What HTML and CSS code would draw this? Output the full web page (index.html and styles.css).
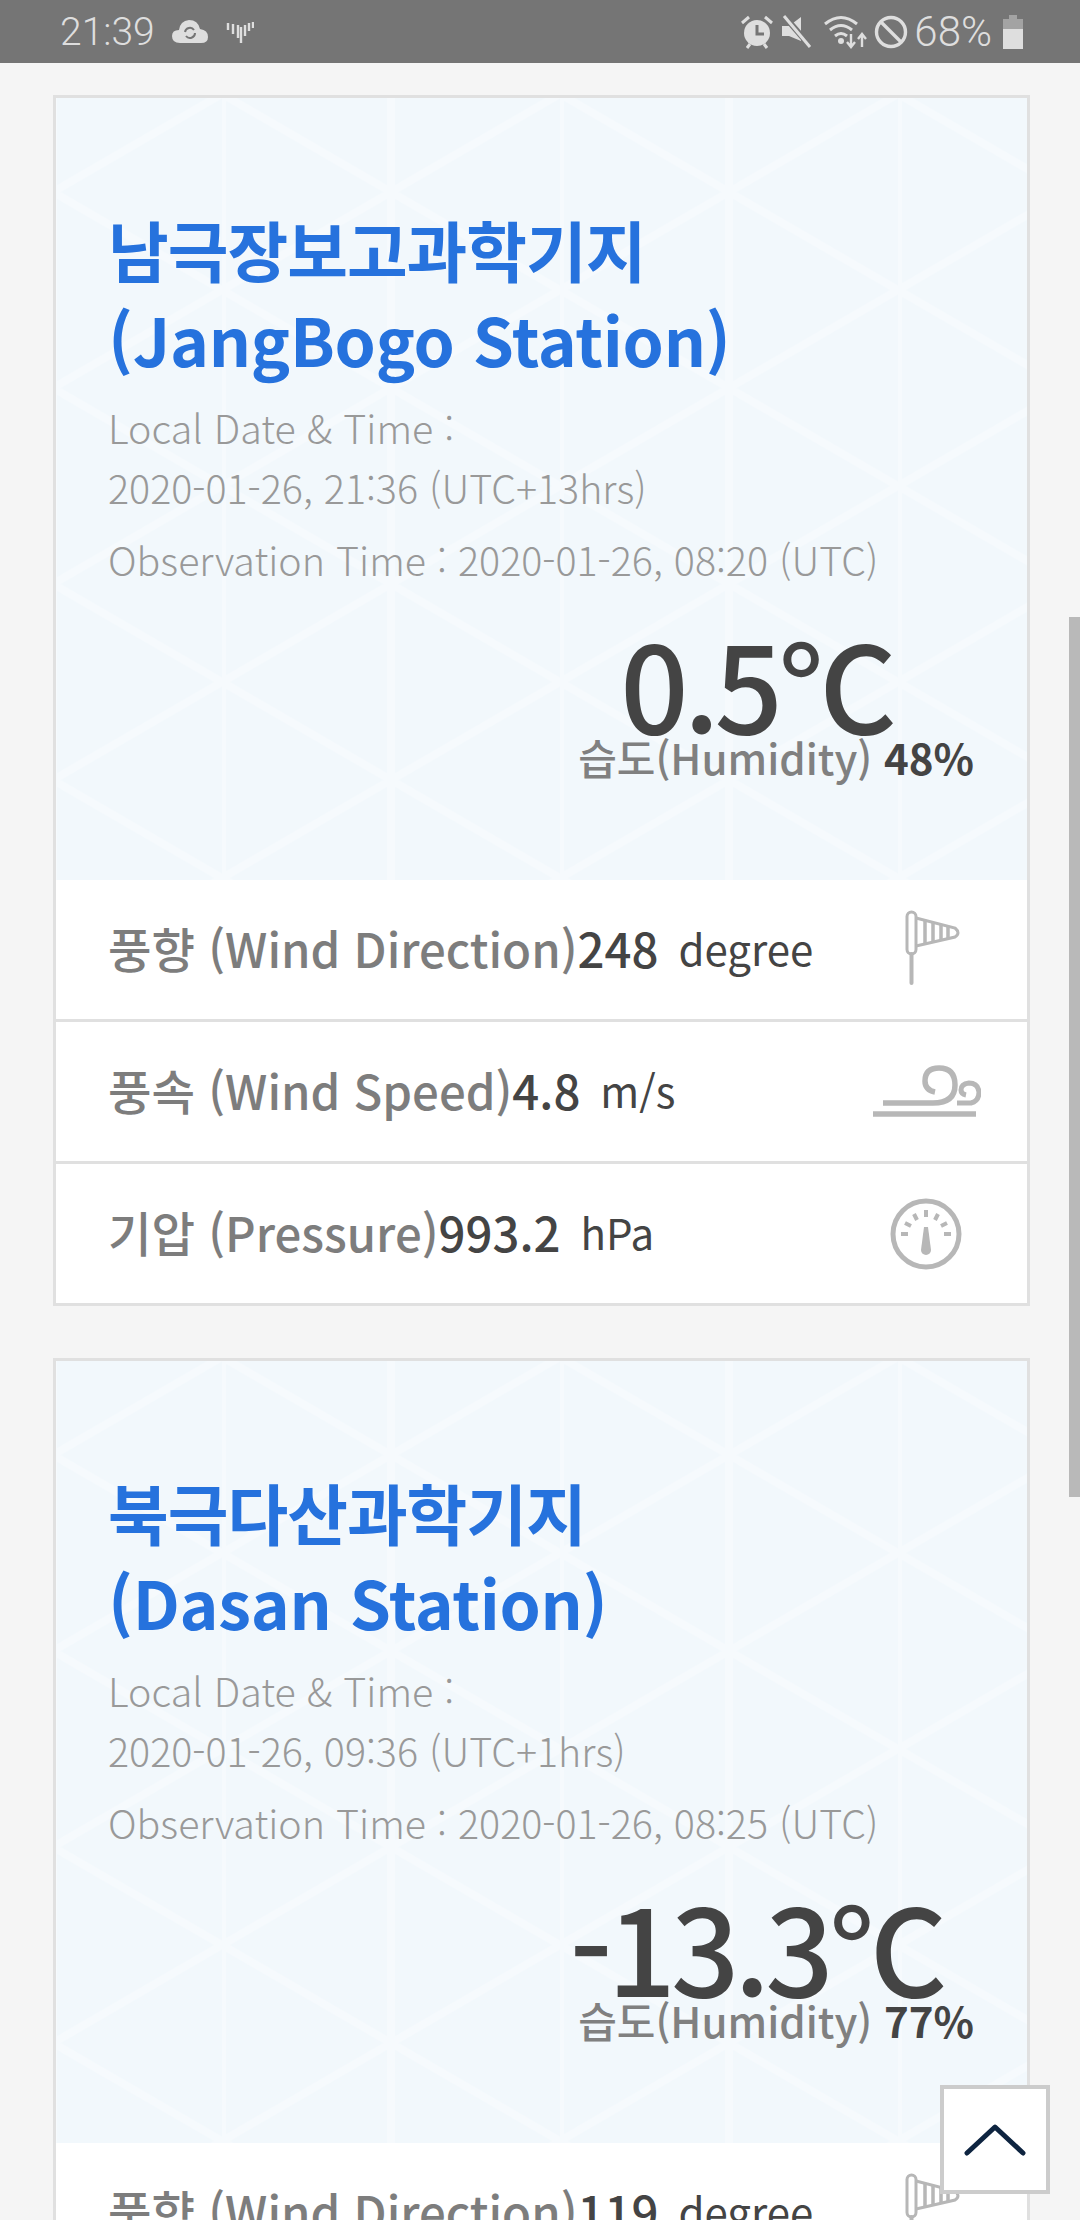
FILE: index.html
```html
<!DOCTYPE html>
<html lang="ko">
<head>
    <meta charset="UTF-8">
    <meta name="viewport" content="width=device-width, initial-scale=1.0">
    <title>Station Weather</title>
    <link rel="stylesheet" href="styles.css">
</head>
<body>

<svg class="defs" width="0" height="0">
    <symbol id="windsock" viewBox="0 0 60 80">
        <rect x="2" y="2" width="9" height="42" rx="4.5" fill="none" stroke="#b7b7b7" stroke-width="3"/>
        <path d="M6.5 44V73" stroke="#b7b7b7" stroke-width="4" stroke-linecap="round"/>
        <path d="M11 8L50 18Q56 23 50 27L11 36" fill="none" stroke="#b7b7b7" stroke-width="3"/>
        <path d="M20 10V34M28 12V32M36 14V30M43 16V28" stroke="#b7b7b7" stroke-width="3.5"/>
    </symbol>
</svg>

<header class="status-bar">
    <div class="status-left">
        <span class="clock">21:39</span>
        <svg class="cloud" width="36" height="24" viewBox="0 0 36 24">
            <path d="M8 23Q0 23 0 16Q0 10 7 10Q8 1 17 0Q26 0 28 9Q36 10 36 17Q36 23 29 23Z" fill="#dedede"/>
            <path d="M13 12a5 5 0 0 1 9-2M23 13a5 5 0 0 1-9 3" fill="none" stroke="#757575" stroke-width="2"/>
        </svg>
        <svg class="pulse" width="28" height="24" viewBox="0 0 28 24">
            <path d="M2 3V10M7 4V14M12 5V18M15 7V23M19 5V16M23 3V11M27 2V8" stroke="#dedede" stroke-width="2.4"/>
        </svg>
    </div>
    <div class="status-right">
        <svg width="34" height="34" viewBox="0 0 34 34">
            <circle cx="17" cy="18" r="13" fill="#dedede"/>
            <path d="M17 10V19H24" fill="none" stroke="#757575" stroke-width="3"/>
            <path d="M2 8L9 2M32 8L25 2M7 33L10 29M27 33L24 29" stroke="#dedede" stroke-width="3"/>
        </svg>
        <svg width="34" height="34" viewBox="0 0 32 34">
            <path d="M1 11H8L20 2V26L8 21H1Z" fill="#dedede"/>
            <path d="M4 2L30 32" stroke="#757575" stroke-width="6"/>
            <path d="M3 1L29 32" stroke="#dedede" stroke-width="3"/>
        </svg>
        <svg class="wifi" width="44" height="34" viewBox="0 0 44 34">
            <path d="M1 9Q17 -4 33 9M6 15Q17 6 28 15M11 21Q17 16 23 21" fill="none" stroke="#dedede" stroke-width="3"/>
            <circle cx="17" cy="26" r="3" fill="#dedede"/>
            <path d="M27 19V31M23 27L27 32L31 27M38 32V20M34 24L38 19L42 24" fill="none" stroke="#dedede" stroke-width="2.4"/>
        </svg>
        <svg width="34" height="34" viewBox="0 0 34 34">
            <circle cx="17" cy="17" r="14.5" fill="none" stroke="#dedede" stroke-width="3.4"/>
            <path d="M7 7L27 27" stroke="#dedede" stroke-width="3.4"/>
        </svg>
        <span class="battery-text">68%</span>
        <div class="battery">
            <div class="battery-cap"></div>
            <div class="battery-empty"></div>
            <div class="battery-fill"></div>
        </div>
    </div>
</header>

<main class="page">

    <section class="card">
        <div class="card-head">
            <h2 class="station">남극장보고과학기지<br><span class="station-en">(JangBogo Station)</span></h2>
            <p class="local-time">Local Date &amp; Time :<br>2020-01-26, 21:36 (UTC+13hrs)</p>
            <p class="obs-time">Observation Time : 2020-01-26, 08:20 (UTC)</p>
            <div class="temp">0.5°C</div>
            <div class="humidity">습도(Humidity) <strong>48%</strong></div>
        </div>
        <div class="row">
            <span class="label">풍향 (Wind Direction)</span><span class="value">248</span><span class="unit">degree</span>
            <div class="row-icon">
                <svg class="sock" width="60" height="80"><use href="#windsock"/></svg>
            </div>
        </div>
        <div class="row">
            <span class="label">풍속 (Wind Speed)</span><span class="value">4.8</span><span class="unit">m/s</span>
            <div class="row-icon">
                <svg width="110" height="56" viewBox="0 0 110 56">
                    <path d="M12 39H62Q84 39 84 21Q84 4 68 4Q54 4 54 17Q54 26 64 28" fill="none" stroke="#b7b7b7" stroke-width="5.5"/>
                    <path d="M86 39H100Q108 37 108 28Q107 19 98 19Q90 20 90 26Q90 30 95 31" fill="none" stroke="#b7b7b7" stroke-width="5"/>
                    <path d="M2 50H105" stroke="#b7b7b7" stroke-width="5.5"/>
                </svg>
            </div>
        </div>
        <div class="row">
            <span class="label">기압 (Pressure)</span><span class="value">993.2</span><span class="unit">hPa</span>
            <div class="row-icon">
                <svg width="72" height="72" viewBox="0 0 72 72">
                    <circle cx="36" cy="36" r="33" fill="none" stroke="#b7b7b7" stroke-width="5"/>
                    <path d="M11 36H18M54 36H61M15 25L21 28M57 25L51 28M24 16L27 22M48 16L45 22M36 12V19" stroke="#b7b7b7" stroke-width="4"/>
                    <path d="M34 29H38L41 52A5 5 0 0 1 31 52Z" fill="#b7b7b7"/>
                </svg>
            </div>
        </div>
    </section>

    <section class="card">
        <div class="card-head">
            <h2 class="station">북극다산과학기지<br><span class="station-en">(Dasan Station)</span></h2>
            <p class="local-time">Local Date &amp; Time :<br>2020-01-26, 09:36 (UTC+1hrs)</p>
            <p class="obs-time">Observation Time : 2020-01-26, 08:25 (UTC)</p>
            <div class="temp">-13.3°C</div>
            <div class="humidity">습도(Humidity) <strong>77%</strong></div>
        </div>
        <div class="row">
            <span class="label">풍향 (Wind Direction)</span><span class="value">119</span><span class="unit">degree</span>
            <div class="row-icon">
                <svg class="sock" width="60" height="80"><use href="#windsock"/></svg>
            </div>
        </div>
    </section>

</main>

<div class="scroll-thumb"></div>

<a class="to-top" href="#">
    <svg width="64" height="36" viewBox="0 0 64 36">
        <path d="M4 31L32 5L60 31" fill="none" stroke="#0e2440" stroke-width="5" stroke-linecap="round" stroke-linejoin="round"/>
    </svg>
</a>

</body>
</html>
```

FILE: styles.css
```css
html, body {
    height: 2220px;
    margin: 0;
    overflow: hidden;
}

body {
    position: relative;
    background-color: #f5f5f5;
    font-family: "Noto Sans CJK KR", "Noto Sans", sans-serif;
}

.defs {
    position: absolute;
}

/* Status bar */
.status-bar {
    display: flex;
    align-items: center;
    justify-content: space-between;
    height: 63px;
    padding: 0 57px 0 60px;
    background-color: #757575;
    color: #dedede;
    font-family: Roboto, sans-serif;
    font-weight: 300;
}

.status-left, .status-right {
    display: flex;
    align-items: center;
}

.clock {
    font-size: 39px;
}

.cloud {
    margin-left: 17px;
}

.pulse {
    margin-left: 18px;
}

.status-right svg {
    margin-right: 6px;
}

.status-right .wifi {
    margin: 0 6px 0 4px;
}

.battery-text {
    font-size: 42px;
    margin: 0 11px 0 0;
}

.battery {
    display: flex;
    flex-direction: column;
    align-items: center;
    width: 20px;
}

.battery-cap {
    width: 8px;
    height: 4px;
    background-color: #a3a3a3;
}

.battery-empty {
    width: 20px;
    height: 10px;
    background-color: #a3a3a3;
}

.battery-fill {
    width: 20px;
    height: 20px;
    background-color: #dedede;
}

/* Cards */
.page {
    padding: 32px 50px 0 53px;
}

.card {
    border: 3px solid #e0e0e0;
    background-color: #fff;
    margin-bottom: 52px;
}

.card-head {
    box-sizing: border-box;
    height: 782px;
    padding: 105px 53px 0 52px;
    background-color: #f2f8fc;
    background-image: url("data:image/svg+xml,%3Csvg xmlns='http://www.w3.org/2000/svg' width='338' height='196'%3E%3Cg fill='none' stroke='%23f6fafd' stroke-width='8'%3E%3Cpath d='M0 0V196M169 0V196M0 0L338 196M338 0L0 196'/%3E%3C/g%3E%3C/svg%3E");
    background-position: 166px -4px;
}

.station {
    margin: 0;
    font-size: 66px;
    line-height: 90px;
    font-weight: 700;
    letter-spacing: -1px;
    color: #2672dd;
}

.station-en {
    letter-spacing: -0.25px;
}

.local-time, .obs-time {
    margin: 0;
    font-size: 39.4px;
    line-height: 60px;
    font-weight: 300;
    color: #999;
}

.local-time {
    margin-top: 14px;
}

.obs-time {
    margin-top: 12px;
}

.temp {
    margin: 44px 0 0 430px;
    text-align: center;
    font-size: 120px;
    font-weight: 500;
    line-height: 99px;
    letter-spacing: -5px;
    color: #444;
}

.humidity {
    text-align: right;
    font-size: 42px;
    font-weight: 500;
    line-height: 50px;
    color: #808080;
}

.humidity strong {
    color: #444;
    font-weight: 700;
}

.row {
    display: flex;
    align-items: center;
    box-sizing: content-box;
    height: 135px;
    padding: 0 46px 4px 52px;
    font-size: 47.3px;
    border-bottom: 3px solid #e0e0e0;
}

.row:last-child {
    border-bottom: none;
}

.label {
    color: #7d7d7d;
    font-weight: 500;
}

.value {
    color: #444;
    font-weight: 500;
}

.unit {
    margin-left: 20px;
    color: #444;
    font-size: 42px;
}

.row-icon {
    display: flex;
    justify-content: center;
    width: 110px;
    margin-left: auto;
    margin-bottom: -4px;
}

.sock {
    margin-left: 18px;
}

/* Overlays */
.scroll-thumb {
    position: absolute;
    top: 617px;
    right: 0;
    width: 11px;
    height: 880px;
    background-color: #b9b9b9;
}

.to-top {
    position: absolute;
    left: 940px;
    top: 2085px;
    box-sizing: border-box;
    display: flex;
    align-items: center;
    justify-content: center;
    width: 110px;
    height: 109px;
    background-color: #fff;
    border: 4px solid #ccc;
}
```
